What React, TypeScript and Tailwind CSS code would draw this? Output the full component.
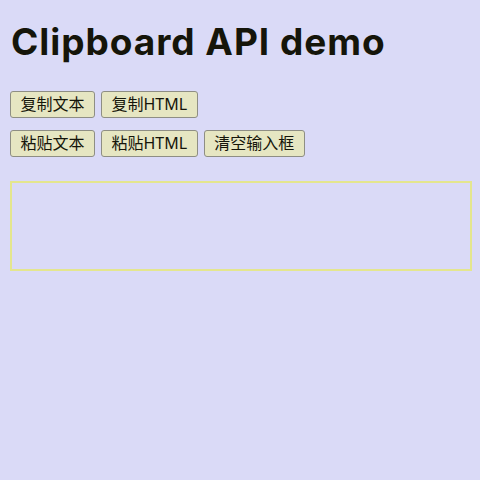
import React from "react";

const btn =
  "h-[27px] px-[9.5px] border border-[#8e8e84] rounded-[3px] bg-[#e6e6c2] text-[16px] leading-[23px] text-[#15150a] whitespace-nowrap";

export default function App() {
  return (
    <div
      className="w-[480px] h-[480px] bg-[#dadaf7] p-[10px] flex flex-col"
      style={{ fontFamily: '"Noto Sans", "Noto Sans CJK SC", sans-serif' }}
    >
      <h1
        className="text-[37px] leading-[44px] font-bold text-[#15150a] mt-[10px] ml-[1px] tracking-[0.95px]"
        style={{ fontFamily: 'Inter, "Noto Sans", sans-serif' }}
      >
        Clipboard API demo
      </h1>
      <div className="flex gap-[6px] mt-[27px]">
        <button className={btn}>复制文本</button>
        <button className={btn}>复制HTML</button>
      </div>
      <div className="flex gap-[6px] mt-[12px]">
        <button className={btn}>粘贴文本</button>
        <button className={btn}>粘贴HTML</button>
        <button className={btn}>清空输入框</button>
      </div>
      <textarea className="mt-[24px] w-[462px] h-[90px] border-2 border-[#e4e68e] bg-transparent resize-none outline-none" />
    </div>
  );
}
